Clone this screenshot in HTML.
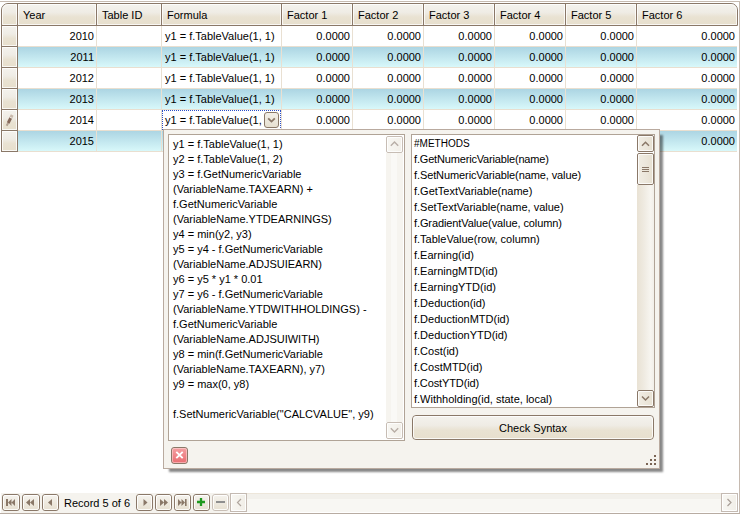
<!DOCTYPE html>
<html><head><meta charset="utf-8"><style>
*{margin:0;padding:0;box-sizing:border-box}
html,body{width:741px;height:514px;overflow:hidden;background:#fff}
body{position:relative;font-family:"Liberation Sans",sans-serif;font-size:11px;color:#000}
.a{position:absolute}
.t{position:absolute;white-space:pre;line-height:13px}
.r{text-align:right}
</style></head><body>
<div class="a" style="left:0px;top:1px;width:740px;height:1px;background:#c6bab0"></div>
<div class="a" style="left:739px;top:1px;width:1px;height:513px;background:#c6bab0"></div>
<div class="a" style="left:0px;top:513px;width:740px;height:1px;background:#b8aca2"></div>
<div class="a" style="left:1px;top:3px;width:737px;height:23px;border:1px solid #8a7868;border-radius:7px 7px 0 0;background:linear-gradient(#f4f2ed 0%,#efece5 40%,#e9e2d2 62%,#e7dfcd 100%)"></div>
<div class="a" style="left:2px;top:4px;width:15px;height:21px;border:1px solid rgba(255,255,255,.75);border-radius:6px 0 0 0"></div>
<div class="a" style="left:18px;top:4px;width:78px;height:21px;border:1px solid rgba(255,255,255,.75)"></div>
<div class="a" style="left:97px;top:4px;width:64px;height:21px;border:1px solid rgba(255,255,255,.75)"></div>
<div class="a" style="left:162px;top:4px;width:119px;height:21px;border:1px solid rgba(255,255,255,.75)"></div>
<div class="a" style="left:282px;top:4px;width:70px;height:21px;border:1px solid rgba(255,255,255,.75)"></div>
<div class="a" style="left:353px;top:4px;width:70px;height:21px;border:1px solid rgba(255,255,255,.75)"></div>
<div class="a" style="left:424px;top:4px;width:70px;height:21px;border:1px solid rgba(255,255,255,.75)"></div>
<div class="a" style="left:495px;top:4px;width:70px;height:21px;border:1px solid rgba(255,255,255,.75)"></div>
<div class="a" style="left:566px;top:4px;width:70px;height:21px;border:1px solid rgba(255,255,255,.75)"></div>
<div class="a" style="left:637px;top:4px;width:100px;height:21px;border:1px solid rgba(255,255,255,.75);border-radius:0 6px 0 0"></div>
<div class="a" style="left:17px;top:4px;width:1px;height:21px;background:#8a7868"></div>
<div class="a" style="left:96px;top:4px;width:1px;height:21px;background:#8a7868"></div>
<div class="a" style="left:161px;top:4px;width:1px;height:21px;background:#8a7868"></div>
<div class="a" style="left:281px;top:4px;width:1px;height:21px;background:#8a7868"></div>
<div class="a" style="left:352px;top:4px;width:1px;height:21px;background:#8a7868"></div>
<div class="a" style="left:423px;top:4px;width:1px;height:21px;background:#8a7868"></div>
<div class="a" style="left:494px;top:4px;width:1px;height:21px;background:#8a7868"></div>
<div class="a" style="left:565px;top:4px;width:1px;height:21px;background:#8a7868"></div>
<div class="a" style="left:636px;top:4px;width:1px;height:21px;background:#8a7868"></div>
<div class="t" style="left:23px;top:9px;">Year</div>
<div class="t" style="left:102px;top:9px;">Table ID</div>
<div class="t" style="left:167px;top:9px;">Formula</div>
<div class="t" style="left:287px;top:9px;">Factor 1</div>
<div class="t" style="left:358px;top:9px;">Factor 2</div>
<div class="t" style="left:429px;top:9px;">Factor 3</div>
<div class="t" style="left:500px;top:9px;">Factor 4</div>
<div class="t" style="left:571px;top:9px;">Factor 5</div>
<div class="t" style="left:642px;top:9px;">Factor 6</div>
<div class="a" style="left:18px;top:46px;width:719px;height:1px;background:#e9dfd0"></div>
<div class="a" style="left:18px;top:47px;width:719px;height:20px;background:linear-gradient(#acd5e3,#d8f8fa)"></div>
<div class="a" style="left:18px;top:67px;width:719px;height:1px;background:#e9dfd0"></div>
<div class="a" style="left:18px;top:88px;width:719px;height:1px;background:#e9dfd0"></div>
<div class="a" style="left:18px;top:89px;width:719px;height:20px;background:linear-gradient(#acd5e3,#d8f8fa)"></div>
<div class="a" style="left:18px;top:109px;width:719px;height:1px;background:#e9dfd0"></div>
<div class="a" style="left:18px;top:130px;width:719px;height:1px;background:#e9dfd0"></div>
<div class="a" style="left:18px;top:131px;width:719px;height:20px;background:linear-gradient(#acd5e3,#d8f8fa)"></div>
<div class="a" style="left:18px;top:151px;width:719px;height:1px;background:#e9dfd0"></div>
<div class="a" style="left:96px;top:26px;width:1px;height:125px;background:#e9e0d2"></div>
<div class="a" style="left:161px;top:26px;width:1px;height:125px;background:#e9e0d2"></div>
<div class="a" style="left:281px;top:26px;width:1px;height:125px;background:#e9e0d2"></div>
<div class="a" style="left:352px;top:26px;width:1px;height:125px;background:#e9e0d2"></div>
<div class="a" style="left:423px;top:26px;width:1px;height:125px;background:#e9e0d2"></div>
<div class="a" style="left:494px;top:26px;width:1px;height:125px;background:#e9e0d2"></div>
<div class="a" style="left:565px;top:26px;width:1px;height:125px;background:#e9e0d2"></div>
<div class="a" style="left:636px;top:26px;width:1px;height:125px;background:#e9e0d2"></div>
<div class="a" style="left:1px;top:25px;width:17px;height:22px;border:1px solid #8a7868;background:linear-gradient(#f4f2ed 0%,#efece5 40%,#e9e2d2 62%,#e7dfcd 100%)"></div>
<div class="a" style="left:2px;top:26px;width:15px;height:20px;border:1px solid rgba(255,255,255,.8)"></div>
<div class="a" style="left:1px;top:46px;width:17px;height:22px;border:1px solid #8a7868;background:linear-gradient(#f4f2ed 0%,#efece5 40%,#e9e2d2 62%,#e7dfcd 100%)"></div>
<div class="a" style="left:2px;top:47px;width:15px;height:20px;border:1px solid rgba(255,255,255,.8)"></div>
<div class="a" style="left:1px;top:67px;width:17px;height:22px;border:1px solid #8a7868;background:linear-gradient(#f4f2ed 0%,#efece5 40%,#e9e2d2 62%,#e7dfcd 100%)"></div>
<div class="a" style="left:2px;top:68px;width:15px;height:20px;border:1px solid rgba(255,255,255,.8)"></div>
<div class="a" style="left:1px;top:88px;width:17px;height:22px;border:1px solid #8a7868;background:linear-gradient(#f4f2ed 0%,#efece5 40%,#e9e2d2 62%,#e7dfcd 100%)"></div>
<div class="a" style="left:2px;top:89px;width:15px;height:20px;border:1px solid rgba(255,255,255,.8)"></div>
<div class="a" style="left:1px;top:109px;width:17px;height:22px;border:1px solid #8a7868;background:linear-gradient(#f4f2ed 0%,#efece5 40%,#e9e2d2 62%,#e7dfcd 100%)"></div>
<div class="a" style="left:2px;top:110px;width:15px;height:20px;border:1px solid rgba(255,255,255,.8)"></div>
<div class="a" style="left:1px;top:130px;width:17px;height:22px;border:1px solid #8a7868;background:linear-gradient(#f4f2ed 0%,#efece5 40%,#e9e2d2 62%,#e7dfcd 100%)"></div>
<div class="a" style="left:2px;top:131px;width:15px;height:20px;border:1px solid rgba(255,255,255,.8)"></div>
<div class="t r" style="left:-106px;width:200px;top:30px;">2010</div>
<div class="t" style="left:165px;top:30px;">y1 = f.TableValue(1, 1)</div>
<div class="t r" style="left:150px;width:200px;top:30px;">0.0000</div>
<div class="t r" style="left:221px;width:200px;top:30px;">0.0000</div>
<div class="t r" style="left:292px;width:200px;top:30px;">0.0000</div>
<div class="t r" style="left:363px;width:200px;top:30px;">0.0000</div>
<div class="t r" style="left:434px;width:200px;top:30px;">0.0000</div>
<div class="t r" style="left:535px;width:200px;top:30px;">0.0000</div>
<div class="t r" style="left:-106px;width:200px;top:51px;">2011</div>
<div class="t" style="left:165px;top:51px;">y1 = f.TableValue(1, 1)</div>
<div class="t r" style="left:150px;width:200px;top:51px;">0.0000</div>
<div class="t r" style="left:221px;width:200px;top:51px;">0.0000</div>
<div class="t r" style="left:292px;width:200px;top:51px;">0.0000</div>
<div class="t r" style="left:363px;width:200px;top:51px;">0.0000</div>
<div class="t r" style="left:434px;width:200px;top:51px;">0.0000</div>
<div class="t r" style="left:535px;width:200px;top:51px;">0.0000</div>
<div class="t r" style="left:-106px;width:200px;top:72px;">2012</div>
<div class="t" style="left:165px;top:72px;">y1 = f.TableValue(1, 1)</div>
<div class="t r" style="left:150px;width:200px;top:72px;">0.0000</div>
<div class="t r" style="left:221px;width:200px;top:72px;">0.0000</div>
<div class="t r" style="left:292px;width:200px;top:72px;">0.0000</div>
<div class="t r" style="left:363px;width:200px;top:72px;">0.0000</div>
<div class="t r" style="left:434px;width:200px;top:72px;">0.0000</div>
<div class="t r" style="left:535px;width:200px;top:72px;">0.0000</div>
<div class="t r" style="left:-106px;width:200px;top:93px;">2013</div>
<div class="t" style="left:165px;top:93px;">y1 = f.TableValue(1, 1)</div>
<div class="t r" style="left:150px;width:200px;top:93px;">0.0000</div>
<div class="t r" style="left:221px;width:200px;top:93px;">0.0000</div>
<div class="t r" style="left:292px;width:200px;top:93px;">0.0000</div>
<div class="t r" style="left:363px;width:200px;top:93px;">0.0000</div>
<div class="t r" style="left:434px;width:200px;top:93px;">0.0000</div>
<div class="t r" style="left:535px;width:200px;top:93px;">0.0000</div>
<div class="t r" style="left:-106px;width:200px;top:114px;">2014</div>
<div class="t" style="left:165px;top:114px;">y1 = f.TableValue(1,</div>
<div class="t r" style="left:150px;width:200px;top:114px;">0.0000</div>
<div class="t r" style="left:221px;width:200px;top:114px;">0.0000</div>
<div class="t r" style="left:292px;width:200px;top:114px;">0.0000</div>
<div class="t r" style="left:363px;width:200px;top:114px;">0.0000</div>
<div class="t r" style="left:434px;width:200px;top:114px;">0.0000</div>
<div class="t r" style="left:535px;width:200px;top:114px;">0.0000</div>
<div class="t r" style="left:-106px;width:200px;top:135px;">2015</div>
<div class="t r" style="left:535px;width:200px;top:135px;">0.0000</div>
<div class="a" style="left:1px;top:493px;width:229px;height:20px;background:#f5f3ee"></div>
<div class="a" style="left:2px;top:494px;width:18px;height:17px;border:1px solid #8a7868;border-radius:3px;background:linear-gradient(#f5f3ee,#e7e0d1)"></div>
<div class="a" style="left:3px;top:495px;width:16px;height:15px;border:1px solid rgba(255,255,255,.85);border-radius:2px"></div>
<div class="a" style="left:22px;top:494px;width:18px;height:17px;border:1px solid #8a7868;border-radius:3px;background:linear-gradient(#f5f3ee,#e7e0d1)"></div>
<div class="a" style="left:23px;top:495px;width:16px;height:15px;border:1px solid rgba(255,255,255,.85);border-radius:2px"></div>
<div class="a" style="left:42px;top:494px;width:17px;height:17px;border:1px solid #8a7868;border-radius:3px;background:linear-gradient(#f5f3ee,#e7e0d1)"></div>
<div class="a" style="left:43px;top:495px;width:15px;height:15px;border:1px solid rgba(255,255,255,.85);border-radius:2px"></div>
<div class="a" style="left:136px;top:494px;width:17px;height:17px;border:1px solid #8a7868;border-radius:3px;background:linear-gradient(#f5f3ee,#e7e0d1)"></div>
<div class="a" style="left:137px;top:495px;width:15px;height:15px;border:1px solid rgba(255,255,255,.85);border-radius:2px"></div>
<div class="a" style="left:155px;top:494px;width:17px;height:17px;border:1px solid #8a7868;border-radius:3px;background:linear-gradient(#f5f3ee,#e7e0d1)"></div>
<div class="a" style="left:156px;top:495px;width:15px;height:15px;border:1px solid rgba(255,255,255,.85);border-radius:2px"></div>
<div class="a" style="left:174px;top:494px;width:17px;height:17px;border:1px solid #8a7868;border-radius:3px;background:linear-gradient(#f5f3ee,#e7e0d1)"></div>
<div class="a" style="left:175px;top:495px;width:15px;height:15px;border:1px solid rgba(255,255,255,.85);border-radius:2px"></div>
<div class="a" style="left:193px;top:494px;width:17px;height:17px;border:1px solid #8a7868;border-radius:3px;background:linear-gradient(#f5f3ee,#e7e0d1)"></div>
<div class="a" style="left:194px;top:495px;width:15px;height:15px;border:1px solid rgba(255,255,255,.85);border-radius:2px"></div>
<div class="a" style="left:212px;top:494px;width:17px;height:17px;border:1px solid #c9bfb6;border-radius:3px;background:linear-gradient(#f5f3ee,#e7e0d1)"></div>
<div class="a" style="left:213px;top:495px;width:15px;height:15px;border:1px solid rgba(255,255,255,.85);border-radius:2px"></div>
<div class="t" style="left:64px;top:497px;color:#000">Record 5 of 6</div>
<div class="a" style="left:230px;top:493px;width:17px;height:19px;border:1px solid #c4bab2;background:linear-gradient(90deg,#f8f7f3,#f1eee7)"></div>
<div class="a" style="left:247px;top:493px;width:474px;height:19px;background:linear-gradient(#ede6da 0,#ede6da 1px,#f2f0eb 1px,#f2f0eb 6px,#f8f7f3 6px)"></div>
<div class="a" style="left:721px;top:493px;width:17px;height:19px;border:1px solid #c4bab2;background:linear-gradient(90deg,#f8f7f3,#f1eee7)"></div>
<div class="a" style="left:722px;top:494px;width:15px;height:17px;border:1px solid rgba(255,255,255,.9);border-radius:1px"></div>
<div class="a" style="left:231px;top:494px;width:15px;height:17px;border:1px solid rgba(255,255,255,.9);border-radius:1px"></div>
<svg class="a" style="left:0;top:490px" width="741" height="24" viewBox="0 490 741 24">
<g fill="#8a7868">
<rect x="6" y="499" width="2" height="7"/><path d="M8 502.5 L11.5 499 V506 Z M11.5 502.5 L15 499 V506 Z"/>
<path d="M26 502.5 L30 499 V506 Z M30 502.5 L34 499 V506 Z"/>
<path d="M48 502.5 L52 499 V506 Z"/>
<path d="M147.5 502.5 L143.5 499 V506 Z"/>
<path d="M168 502.5 L164 499 V506 Z M164 502.5 L160 499 V506 Z"/>
<path d="M185 502.5 L181.5 499 V506 Z M181.5 502.5 L178 499 V506 Z"/><rect x="185" y="499" width="1.6" height="7"/>
</g>
<path d="M201 498 V506 M197 502 H205" stroke="#1f991f" stroke-width="2.3"/>
<path d="M216 502 H225" stroke="#8f8f8f" stroke-width="2"/>
<path d="M241 499 L237.5 502.5 L241 506" stroke="#b0a69e" stroke-width="1.2" fill="none"/>
<path d="M727.5 499 L731 502.5 L727.5 506" stroke="#a89e96" stroke-width="1.2" fill="none"/>
</svg>
<svg class="a" style="left:0;top:108px" width="18" height="22" viewBox="0 108 18 22">
<path d="M6.6 125.8 L8.2 123" stroke="#b3a293" stroke-width="2"/>
<path d="M8.2 123 L10.9 117.6" stroke="#86685a" stroke-width="3"/>
<path d="M10.9 117.6 L12.2 115" stroke="#c9b9ab" stroke-width="3"/>
<path d="M9.6 117.2 L12.2 118.4" stroke="#f4efe8" stroke-width="0.9"/>
</svg>
<div class="a" style="left:162px;top:110px;width:119px;height:20px;border:1px dotted #2a4ec8"></div>
<div class="a" style="left:264px;top:112px;width:15px;height:16px;border:1px solid #8a7868;border-radius:3px;background:linear-gradient(#f2efe8,#e7e0d1)"></div>
<svg class="a" style="left:264px;top:112px" width="15" height="16" viewBox="264 112 15 16">
<path d="M268.2 118.3 L271.5 121.6 L274.8 118.3" stroke="#8a7868" stroke-width="1.8" fill="none"/></svg>
<div class="a" style="left:163px;top:129px;width:497px;height:340px;border:1px solid #b9aa9f;background:#f5f3ee;box-shadow:4px 4px 2px -1.5px rgba(0,0,0,.47)"></div>
<div class="a" style="left:168px;top:134px;width:237px;height:307px;border:1px solid #b0a396;background:#fff"></div>
<div class="a" style="left:386px;top:153px;width:17px;height:269px;background:linear-gradient(90deg,#f6f4ef 0,#f6f4ef 5px,#faf9f6 5px,#faf9f6 11px,#f6f4ef 11px)"></div>
<div class="a" style="left:386px;top:136px;width:17px;height:17px;border:1px solid #c7bdb4;border-radius:2px;background:linear-gradient(90deg,#f8f7f3,#f2efe8)"></div>
<div class="a" style="left:387px;top:137px;width:15px;height:15px;border:1px solid rgba(255,255,255,.8);border-radius:1px"></div>
<div class="a" style="left:386px;top:422px;width:17px;height:17px;border:1px solid #c7bdb4;border-radius:2px;background:linear-gradient(90deg,#f8f7f3,#f2efe8)"></div>
<div class="a" style="left:387px;top:423px;width:15px;height:15px;border:1px solid rgba(255,255,255,.8);border-radius:1px"></div>
<svg class="a" style="left:386px;top:136px" width="17" height="303" viewBox="386 136 17 303">
<path d="M390.8 145.7 L394.5 142 L398.2 145.7" stroke="#b8aea6" stroke-width="1.4" fill="none"/>
<path d="M390.8 428.3 L394.5 432 L398.2 428.3" stroke="#b8aea6" stroke-width="1.4" fill="none"/>
</svg>
<div class="t" style="left:173px;top:138px;">y1 = f.TableValue(1, 1)</div>
<div class="t" style="left:173px;top:153px;">y2 = f.TableValue(1, 2)</div>
<div class="t" style="left:173px;top:168px;">y3 = f.GetNumericVariable</div>
<div class="t" style="left:173px;top:183px;">(VariableName.TAXEARN) +</div>
<div class="t" style="left:173px;top:198px;">f.GetNumericVariable</div>
<div class="t" style="left:173px;top:213px;">(VariableName.YTDEARNINGS)</div>
<div class="t" style="left:173px;top:228px;">y4 = min(y2, y3)</div>
<div class="t" style="left:173px;top:243px;">y5 = y4 - f.GetNumericVariable</div>
<div class="t" style="left:173px;top:258px;">(VariableName.ADJSUIEARN)</div>
<div class="t" style="left:173px;top:273px;">y6 = y5 * y1 * 0.01</div>
<div class="t" style="left:173px;top:288px;">y7 = y6 - f.GetNumericVariable</div>
<div class="t" style="left:173px;top:303px;">(VariableName.YTDWITHHOLDINGS) -</div>
<div class="t" style="left:173px;top:318px;">f.GetNumericVariable</div>
<div class="t" style="left:173px;top:333px;">(VariableName.ADJSUIWITH)</div>
<div class="t" style="left:173px;top:348px;">y8 = min(f.GetNumericVariable</div>
<div class="t" style="left:173px;top:363px;">(VariableName.TAXEARN), y7)</div>
<div class="t" style="left:173px;top:378px;">y9 = max(0, y8)</div>
<div class="t" style="left:173px;top:408px;">f.SetNumericVariable(&quot;CALCVALUE&quot;, y9)</div>
<div class="a" style="left:411px;top:134px;width:244px;height:274px;border:1px solid #b0a396;background:#fff"></div>
<div class="t" style="left:414px;top:137px;font-size:10px">#METHODS</div>
<div class="t" style="left:414px;top:153px;letter-spacing:-0.17px">f.GetNumericVariable(name)</div>
<div class="t" style="left:414px;top:169px;letter-spacing:-0.1px">f.SetNumericVariable(name, value)</div>
<div class="t" style="left:414px;top:185px;">f.GetTextVariable(name)</div>
<div class="t" style="left:414px;top:201px;">f.SetTextVariable(name, value)</div>
<div class="t" style="left:414px;top:217px;letter-spacing:-0.1px">f.GradientValue(value, column)</div>
<div class="t" style="left:414px;top:233px;">f.TableValue(row, column)</div>
<div class="t" style="left:414px;top:249px;">f.Earning(id)</div>
<div class="t" style="left:414px;top:265px;">f.EarningMTD(id)</div>
<div class="t" style="left:414px;top:281px;">f.EarningYTD(id)</div>
<div class="t" style="left:414px;top:297px;">f.Deduction(id)</div>
<div class="t" style="left:414px;top:313px;">f.DeductionMTD(id)</div>
<div class="t" style="left:414px;top:329px;">f.DeductionYTD(id)</div>
<div class="t" style="left:414px;top:345px;">f.Cost(id)</div>
<div class="t" style="left:414px;top:361px;">f.CostMTD(id)</div>
<div class="t" style="left:414px;top:377px;letter-spacing:-0.12px">f.CostYTD(id)</div>
<div class="t" style="left:414px;top:393px;">f.Withholding(id, state, local)</div>
<div class="a" style="left:637px;top:185px;width:17px;height:205px;background:linear-gradient(90deg,#e9e2d4 0%,#eee9df 35%,#f7f5f0 80%,#f2efe9 100%)"></div>
<div class="a" style="left:637px;top:135px;width:17px;height:17px;border:1px solid #8a7868;border-radius:2px;background:linear-gradient(90deg,#f1ede4 0,#ece7dc 50%,#e7e0d1 100%)"></div>
<div class="a" style="left:638px;top:136px;width:15px;height:15px;border:1px solid rgba(255,255,255,.8);border-radius:1px"></div>
<div class="a" style="left:637px;top:153px;width:17px;height:32px;border:1px solid #8a7868;border-radius:2px;background:linear-gradient(90deg,#f1ede4 0,#ece7dc 50%,#e7e0d1 100%)"></div>
<div class="a" style="left:638px;top:154px;width:15px;height:30px;border:1px solid rgba(255,255,255,.8);border-radius:1px"></div>
<div class="a" style="left:637px;top:390px;width:17px;height:17px;border:1px solid #8a7868;border-radius:2px;background:linear-gradient(90deg,#f1ede4 0,#ece7dc 50%,#e7e0d1 100%)"></div>
<div class="a" style="left:638px;top:391px;width:15px;height:15px;border:1px solid rgba(255,255,255,.8);border-radius:1px"></div>
<svg class="a" style="left:637px;top:135px" width="17" height="272" viewBox="637 135 17 272">
<path d="M642 145.8 L645.5 142.3 L649 145.8" stroke="#8a7868" stroke-width="1.5" fill="none"/>
<path d="M642 167.5 H649 M642 169.5 H649 M642 171.5 H649" stroke="#8a7868" stroke-width="1"/>
<path d="M642 396.5 L645.5 400 L649 396.5" stroke="#8a7868" stroke-width="1.5" fill="none"/>
</svg>
<div class="a" style="left:412px;top:415px;width:242px;height:25px;border:1px solid #8a7868;border-radius:4px;background:linear-gradient(#f4f2ed 0%,#efece5 40%,#e9e2d2 62%,#e7dfcd 100%)"></div>
<div class="a" style="left:413px;top:416px;width:240px;height:23px;border:1px solid rgba(255,255,255,.8);border-radius:3px"></div>
<div class="t" style="left:412px;top:422px;width:242px;text-align:center">Check Syntax</div>
<div class="a" style="left:171px;top:447px;width:17px;height:17px;border:1px solid #8a7868;border-radius:3px;background:linear-gradient(#f4a0a2,#ea6d71)"></div>
<div class="a" style="left:172px;top:448px;width:15px;height:15px;border:1px solid rgba(255,220,220,.55);border-radius:2px"></div>
<svg class="a" style="left:171px;top:447px" width="17" height="17" viewBox="171 447 17 17">
<path d="M176.3 451.8 L182.7 458.2 M182.7 451.8 L176.3 458.2" stroke="#fff" stroke-width="1.9"/></svg>
<div class="a" style="left:654px;top:455px;width:2px;height:2px;background:#7a6454"></div>
<div class="a" style="left:650px;top:459px;width:2px;height:2px;background:#7a6454"></div>
<div class="a" style="left:654px;top:459px;width:2px;height:2px;background:#7a6454"></div>
<div class="a" style="left:646px;top:463px;width:2px;height:2px;background:#7a6454"></div>
<div class="a" style="left:650px;top:463px;width:2px;height:2px;background:#7a6454"></div>
<div class="a" style="left:654px;top:463px;width:2px;height:2px;background:#7a6454"></div>
</body></html>
